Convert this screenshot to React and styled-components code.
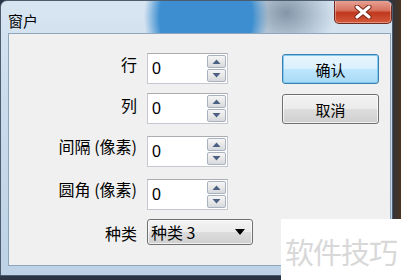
import React from "react";
import styled, { createGlobalStyle } from "styled-components";

const Global = createGlobalStyle`
  html, body { margin: 0; padding: 0; }
  body { background: #1d2430; }
`;

const Desktop = styled.div`
  position: relative;
  width: 401px;
  height: 280px;
  overflow: hidden;
  background: linear-gradient(90deg, #2a3444 0%, #2a3444 97%, #4a3320 100%);
`;

const Window = styled.div`
  width: 393px;
  height: 276px;
  box-sizing: border-box;
  border: 1px solid #4d5d6e;
  border-radius: 7px 7px 0 0;
  overflow: hidden;
  display: flex;
  flex-direction: column;
  background:
    radial-gradient(ellipse 62px 70px at 205px 16px, rgba(60,142,208,1) 0%, rgba(60,142,208,1) 75%, rgba(60,142,208,0) 100%),
    radial-gradient(ellipse 50px 40px at 285px 12px, rgba(110,130,150,0.8) 0%, rgba(110,130,150,0) 100%),
    linear-gradient(180deg, #d8e5f1 0%, #c9dbec 40%, #bdd2e6 100%);
`;

const TitleBar = styled.div`
  height: 32px;
  flex: none;
  display: flex;
  justify-content: space-between;
  align-items: flex-start;
  padding-left: 7px;
`;

const Title = styled.div`
  margin-top: 11px;
  font: 15px "Noto Sans CJK SC", sans-serif;
  line-height: 18px;
  color: #000;
`;

const CloseBtn = styled.div`
  width: 58px;
  height: 24px;
  margin-top: -1px;
  box-sizing: border-box;
  border: 1px solid #6e2a20;
  border-top: none;
  border-radius: 0 0 5px 5px;
  background: linear-gradient(180deg, #e9a597 0%, #d7715e 45%, #c0381e 55%, #d4593b 100%);
  box-shadow: inset 0 0 0 1px rgba(255,255,255,0.35);
  display: flex;
  align-items: center;
  justify-content: center;
`;

const Client = styled.div`
  margin: 0 1px 9px 7px;
  flex: 1;
  box-sizing: border-box;
  background: #f0f0f0;
  border: 1px solid #8fa6bd;
  display: flex;
  padding-top: 19px;
  gap: 29px;
  font-family: "Noto Sans CJK SC", sans-serif;
`;

const Form = styled.div`
  display: grid;
  grid-template-columns: 128px auto;
  grid-template-rows: 40px 43px 43px 40px auto;
  column-gap: 10px;
  align-items: start;
`;

const Label = styled.div`
  text-align: right;
  font-size: 16px;
  line-height: 20px;
  padding-top: ${(p) => p.$top}px;
  color: #000;
  white-space: nowrap;
`;

const Spinner = styled.div`
  width: 81px;
  height: 31px;
  box-sizing: border-box;
  border: 1px solid #c6c9cf;
  border-top-color: #abadb3;
  background: #fff;
  display: flex;
  padding: 1px 1px 1px 0;
`;

const SpinText = styled.div`
  flex: 1;
  padding-left: 4px;
  font: 16px "Liberation Sans", sans-serif;
  line-height: 28px;
  color: #000;
`;

const SpinButtons = styled.div`
  width: 19px;
  display: flex;
  flex-direction: column;
  gap: 1px;
`;

const SpinBtn = styled.div`
  flex: 1;
  box-sizing: border-box;
  border: 1px solid #a9b3bf;
  border-radius: 2px;
  background: linear-gradient(180deg, #f6f6f6 0%, #e8e8e8 50%, #d6d9dd 100%);
  display: flex;
  align-items: center;
  justify-content: center;
`;

const Combo = styled.div`
  width: 106px;
  height: 26px;
  box-sizing: border-box;
  border: 1px solid #707070;
  border-radius: 3px;
  background: linear-gradient(180deg, #f3f3f3 0%, #ebebeb 50%, #dddddd 51%, #cfcfcf 100%);
  box-shadow: inset 0 0 0 1px rgba(255,255,255,0.7);
  display: flex;
  align-items: center;
  justify-content: space-between;
  padding: 0 7px 0 3px;
  font-size: 16px;
  color: #000;
`;

const Buttons = styled.div`
  display: flex;
  flex-direction: column;
  gap: 10px;
  padding-top: 1px;
`;

const Button = styled.div`
  width: 97px;
  height: 30px;
  box-sizing: border-box;
  border-radius: 3px;
  border: 1px solid ${(p) => (p.$primary ? "#3c7fb1" : "#707070")};
  background: ${(p) =>
    p.$primary
      ? "linear-gradient(180deg, #eaf6fd 0%, #d9f0fc 50%, #bee6fd 51%, #a7d9f5 100%)"
      : "linear-gradient(180deg, #f2f2f2 0%, #ebebeb 50%, #dddddd 51%, #cfcfcf 100%)"};
  box-shadow: inset 0 0 0 1px ${(p) => (p.$primary ? "rgba(120,200,240,0.9)" : "rgba(255,255,255,0.7)")};
  display: flex;
  align-items: center;
  justify-content: center;
  font-size: 15px;
  color: #000;
`;

const Watermark = styled.div`
  position: absolute;
  left: 281px;
  top: 219px;
  width: 120px;
  height: 61px;
  background: #fff;
  display: flex;
  align-items: center;
  justify-content: center;
  font: 29px "Noto Sans CJK SC", sans-serif;
  color: #d8d8d8;
  letter-spacing: -1px;
  padding-top: 2px;
  box-sizing: border-box;
`;

const Up = () => (
  <svg width="9" height="5" viewBox="0 0 9 5">
    <path d="M0.5 5 L4.5 0.5 L8.5 5 Z" fill="#4d6185" />
  </svg>
);
const Down = () => (
  <svg width="9" height="5" viewBox="0 0 9 5">
    <path d="M0.5 0 L4.5 4.5 L8.5 0 Z" fill="#4d6185" />
  </svg>
);

const SpinField = ({ value }) => (
  <Spinner>
    <SpinText>{value}</SpinText>
    <SpinButtons>
      <SpinBtn><Up /></SpinBtn>
      <SpinBtn><Down /></SpinBtn>
    </SpinButtons>
  </Spinner>
);

const rows = [
  { label: "行", top: 1 },
  { label: "列", top: 2 },
  { label: "间隔 (像素)", top: 0 },
  { label: "圆角 (像素)", top: 0 },
];

export default function App() {
  return (
    <>
      <Global />
      <Desktop>
        <Window>
          <TitleBar>
            <Title>窗户</Title>
            <CloseBtn>
              <svg width="18" height="14" viewBox="0 0 18 14">
                <path
                  d="M3 2 L15 12 M15 2 L3 12"
                  stroke="#7a2a1c"
                  strokeWidth="5"
                  strokeLinecap="round"
                />
                <path
                  d="M3 2 L15 12 M15 2 L3 12"
                  stroke="#ffffff"
                  strokeWidth="3"
                  strokeLinecap="round"
                />
              </svg>
            </CloseBtn>
          </TitleBar>
          <Client>
            <Form>
              {rows.map((r) => (
                <React.Fragment key={r.label}>
                  <Label $top={r.top}>{r.label}</Label>
                  <SpinField value="0" />
                </React.Fragment>
              ))}
              <Label $top={4}>种类</Label>
              <Combo>
                <span>种类 3</span>
                <svg width="10" height="6" viewBox="0 0 10 6">
                  <path d="M0 0 L10 0 L5 6 Z" fill="#000" />
                </svg>
              </Combo>
            </Form>
            <Buttons>
              <Button $primary>确认</Button>
              <Button>取消</Button>
            </Buttons>
          </Client>
        </Window>
        <Watermark>软件技巧</Watermark>
      </Desktop>
    </>
  );
}
